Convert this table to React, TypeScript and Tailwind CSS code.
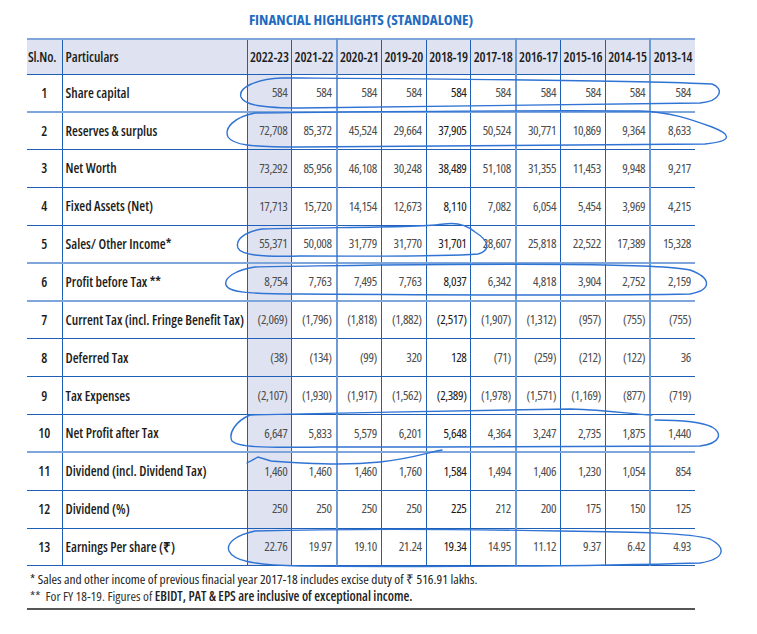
import React from "react";

const years = ["2022-23", "2021-22", "2020-21", "2019-20", "2018-19", "2017-18", "2016-17", "2015-16", "2014-15", "2013-14"];

const rows: { no: number; label: string; values: string[]; line: "pale" | "dark" }[] = [
  { no: 1, label: "Share capital", values: ["584", "584", "584", "584", "584", "584", "584", "584", "584", "584"], line: "pale" },
  { no: 2, label: "Reserves & surplus", values: ["72,708", "85,372", "45,524", "29,664", "37,905", "50,524", "30,771", "10,869", "9,364", "8,633"], line: "dark" },
  { no: 3, label: "Net Worth", values: ["73,292", "85,956", "46,108", "30,248", "38,489", "51,108", "31,355", "11,453", "9,948", "9,217"], line: "dark" },
  { no: 4, label: "Fixed Assets (Net)", values: ["17,713", "15,720", "14,154", "12,673", "8,110", "7,082", "6,054", "5,454", "3,969", "4,215"], line: "dark" },
  { no: 5, label: "Sales/ Other Income*", values: ["55,371", "50,008", "31,779", "31,770", "31,701", "28,607", "25,818", "22,522", "17,389", "15,328"], line: "pale" },
  { no: 6, label: "Profit before Tax **", values: ["8,754", "7,763", "7,495", "7,763", "8,037", "6,342", "4,818", "3,904", "2,752", "2,159"], line: "pale" },
  { no: 7, label: "Current Tax (incl. Fringe Benefit Tax)", values: ["(2,069)", "(1,796)", "(1,818)", "(1,882)", "(2,517)", "(1,907)", "(1,312)", "(957)", "(755)", "(755)"], line: "dark" },
  { no: 8, label: "Deferred Tax", values: ["(38)", "(134)", "(99)", "320", "128", "(71)", "(259)", "(212)", "(122)", "36"], line: "dark" },
  { no: 9, label: "Tax Expenses", values: ["(2,107)", "(1,930)", "(1,917)", "(1,562)", "(2,389)", "(1,978)", "(1,571)", "(1,169)", "(877)", "(719)"], line: "dark" },
  { no: 10, label: "Net Profit after Tax", values: ["6,647", "5,833", "5,579", "6,201", "5,648", "4,364", "3,247", "2,735", "1,875", "1,440"], line: "pale" },
  { no: 11, label: "Dividend (incl. Dividend Tax)", values: ["1,460", "1,460", "1,460", "1,760", "1,584", "1,494", "1,406", "1,230", "1,054", "854"], line: "dark" },
  { no: 12, label: "Dividend (%)", values: ["250", "250", "250", "250", "225", "212", "200", "175", "150", "125"], line: "dark" },
  { no: 13, label: "Earnings Per share  (₹)", values: ["22.76", "19.97", "19.10", "21.24", "19.34", "14.95", "11.12", "9.37", "6.42", "4.93"], line: "dark" },
];

// right border of each year column (last one has none)
const yearBorder = [
  "border-r border-r-[#1f5fb5]",
  "border-r-2 border-r-[#6e9bd6]",
  "border-r border-r-[#1f5fb5]",
  "border-r border-r-[#1f5fb5]",
  "border-r border-r-[#1f5fb5]",
  "border-r-2 border-r-[#6e9bd6]",
  "border-r border-r-[#1f5fb5]",
  "border-r border-r-[#1f5fb5]",
  "border-r-2 border-r-[#6e9bd6]",
  "",
];

const Scribbles: React.FC = () => (
  <svg
    className="absolute left-0 top-0 pointer-events-none"
    width="757"
    height="634"
    viewBox="0 0 757 634"
    fill="none"
    stroke="#2f73d4"
    strokeWidth="1.4"
    strokeLinecap="round"
  >
    {/* row 1 */}
    <path d="M282 78 C255 79 238 88 241 97 C244 105 262 108 300 108 C420 107 560 105 700 103 C722 101 724 88 712 84 C640 80 460 79 300 78 C292 78 286 78 282 78" />
    {/* row 2 */}
    <path d="M255 113 C234 117 224 128 228 137 C233 145 250 147 300 147 C450 147 600 146 705 144 C735 141 730 134 712 127 C690 119 670 112 640 111 C500 110 350 112 255 113" />
    {/* row 5 */}
    <path d="M262 229 C244 232 235 240 238 248 C241 255 260 257 300 256 C380 256 440 257 478 254 C492 250 488 240 475 232 C468 226 458 222 444 224 C420 228 330 227 262 229" />
    {/* row 6 */}
    <path d="M255 267 C235 270 224 278 226 285 C228 292 246 294 300 294 C450 295 600 296 690 294 C712 290 712 278 690 270 C660 263 500 264 380 265 C320 266 280 266 255 267" />
    {/* row 10 */}
    <path d="M250 415 C236 421 228 433 232 441 C238 447 260 448 320 447 C450 447 600 447 700 446 C722 443 722 433 712 427 C700 421 680 420 655 420" />
    <path d="M250 415 C350 413 480 410 570 409 C610 410 630 414 652 415" />
    <path d="M247 463 L258 457 L271 461 C300 463 340 466 380 462 C410 459 430 452 442 450" />
    {/* row 13 */}
    <path d="M255 531 C236 535 226 543 229 551 C233 560 250 565 300 566 C450 567 600 566 700 563 C725 559 727 548 710 539 C690 533 640 532 560 531 C450 529 330 529 255 531" />
  </svg>
);

const App: React.FC = () => {
  return (
    <div className="relative w-[757px] h-[634px] bg-white font-['Open_Sans',sans-serif] font-stretch-condensed text-[#222]">
      <div className="w-[668px] ml-[27px] pt-[9px]">
        <h1 className="text-center text-[15px] leading-[20px] font-bold text-[#1f6bbf] mb-[9px]">
          FINANCIAL HIGHLIGHTS (STANDALONE)
        </h1>
        <table className="w-[668px] table-fixed border-collapse text-[13.5px]">
          <colgroup>
            <col className="w-[35px]" />
            <col className="w-[185px]" />
            {years.map((y) => (
              <col key={y} className="w-[44.8px]" />
            ))}
          </colgroup>
          <thead>
            <tr className="h-[35px] bg-[#dfe3f1] border-t-2 border-t-[#7fa6da] border-b border-b-[#1f5fb5]">
              <th className="font-semibold text-left pl-[1px] border-r border-r-[#1f5fb5] text-[#1c1c1c] whitespace-nowrap tracking-[-0.2px]">Sl.No.</th>
              <th className="font-semibold text-left pl-[3px] border-r border-r-[#1f5fb5] text-[#1c1c1c]">Particulars</th>
              {years.map((y, i) => (
                <th key={y} className={`font-semibold text-center px-0 text-[#1c1c1c] whitespace-nowrap tracking-[-0.2px] ${yearBorder[i]}`}>
                  {y}
                </th>
              ))}
            </tr>
          </thead>
          <tbody>
            {rows.map((r) => (
              <tr
                key={r.no}
                className={`h-[37.85px] ${r.line === "pale" ? "border-b-2 border-b-[#7fa6da]" : "border-b border-b-[#1f5fb5]"}`}
              >
                <td className="text-center font-semibold border-r border-r-[#1f5fb5] text-[#1c1c1c]">{r.no}</td>
                <td className="pl-[3px] font-semibold whitespace-nowrap border-r border-r-[#1f5fb5] text-[#1c1c1c]">{r.label}</td>
                {r.values.map((v, i) => (
                  <td
                    key={i}
                    className={`text-right pr-[4px] whitespace-nowrap text-[13px] tracking-[-0.4px] ${yearBorder[i]} ${i === 0 ? "bg-[#dfe3f1]" : ""} ${
                      i === 4 ? "text-[#1a1a1a] font-medium" : "text-[#4d4d4d]"
                    }`}
                  >
                    {v}
                  </td>
                ))}
              </tr>
            ))}
          </tbody>
        </table>
        <div className="pt-[5px] pl-[3px] text-[13.4px] leading-[17px] text-[#222]">
          <p className="font-medium">* Sales and other income of previous finacial year 2017-18 includes excise duty of ₹ 516.91 lakhs.</p>
          <p>
            <span className="text-[#333] font-medium">**&nbsp; For FY 18-19. Figures of </span>
            <span className="font-semibold">EBIDT, PAT &amp; EPS are inclusive of exceptional income.</span>
          </p>
        </div>
        <div className="mt-[3px] h-[2px] bg-[#555]" />
      </div>
      <Scribbles />
    </div>
  );
};

export default App;
